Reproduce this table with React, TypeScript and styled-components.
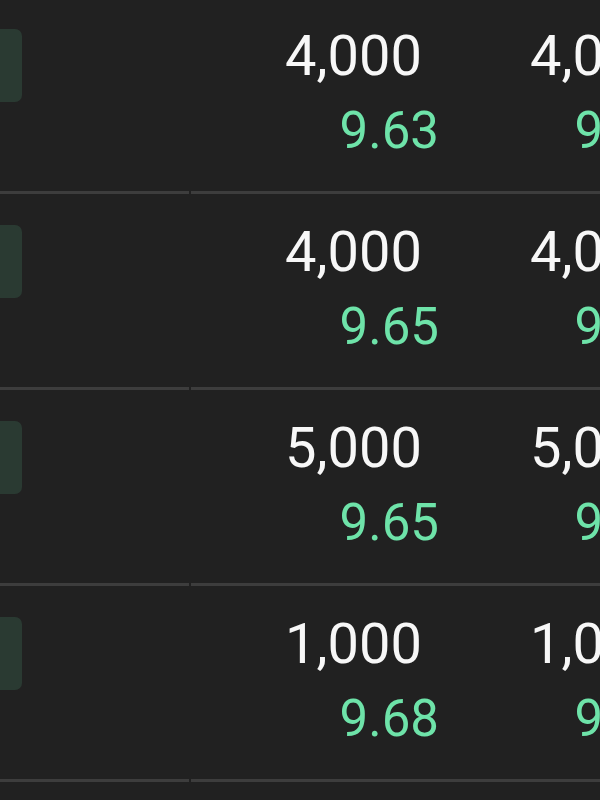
import styled, { createGlobalStyle } from "styled-components";

type Quote = { qty: string; rate: string; qty2: string; rate2: string };

const quotes: Quote[] = [
  { qty: "4,000", rate: "9.63", qty2: "4,000", rate2: "9.63" },
  { qty: "4,000", rate: "9.65", qty2: "4,000", rate2: "9.65" },
  { qty: "5,000", rate: "9.65", qty2: "5,000", rate2: "9.65" },
  { qty: "1,000", rate: "9.68", qty2: "1,000", rate2: "9.68" },
  { qty: "2,000", rate: "9.70", qty2: "2,000", rate2: "9.70" },
];

const GlobalStyle = createGlobalStyle`
  html, body {
    margin: 0;
    padding: 0;
    background: #212121;
    overflow: hidden;
  }
  body {
    font-family: Roboto, "Noto Sans", sans-serif;
  }
`;

function App() {
  return (
    <>
      <GlobalStyle />
      <Screen>
        <List>
          {quotes.map((q, i) => (
            <Row key={i}>
              <LeftPane>
                <Badge />
              </LeftPane>
              <RightPane>
                <Cell>
                  <Qty $pad={18}>{q.qty}</Qty>
                  <Rate $pad={1}>{q.rate}</Rate>
                </Cell>
                <Cell>
                  <Qty $pad={21}>{q.qty2}</Qty>
                  <Rate $pad={14}>{q.rate2}</Rate>
                </Cell>
              </RightPane>
            </Row>
          ))}
        </List>
      </Screen>
    </>
  );
}

const Screen = styled.div`
  width: 600px;
  height: 800px;
  overflow: hidden;
  background: #212121;
`;

const List = styled.div`
  display: flex;
  flex-direction: column;
  margin-top: -2px;
`;

const Row = styled.div`
  display: flex;
  height: 196px;
  gap: 2px;
`;

const LeftPane = styled.div`
  width: 189px;
  flex-shrink: 0;
  border-bottom: 3px solid #3d3d3d;
`;

const RightPane = styled.div`
  flex: 1;
  display: flex;
  border-bottom: 3px solid #3d3d3d;
  overflow: hidden;
`;

const Badge = styled.div`
  width: 22px;
  height: 73px;
  margin-top: 31px;
  background: #2a3a32;
  border-radius: 0 7px 7px 0;
`;

const Cell = styled.div`
  width: 249px;
  flex-shrink: 0;
  display: flex;
  flex-direction: column;
  align-items: flex-end;
  padding-top: 30px;
  &:nth-child(2) {
    width: 248px;
  }
`;

const Qty = styled.div<{ $pad: number }>`
  font-size: 56px;
  line-height: 56px;
  color: #f7f7f7;
  margin-right: ${(p) => p.$pad}px;
  white-space: nowrap;
`;

const Rate = styled.div<{ $pad: number }>`
  font-size: 51px;
  line-height: 51px;
  color: #6ee3a9;
  margin-top: 21px;
  margin-right: ${(p) => p.$pad}px;
  white-space: nowrap;
`;

export default App;
